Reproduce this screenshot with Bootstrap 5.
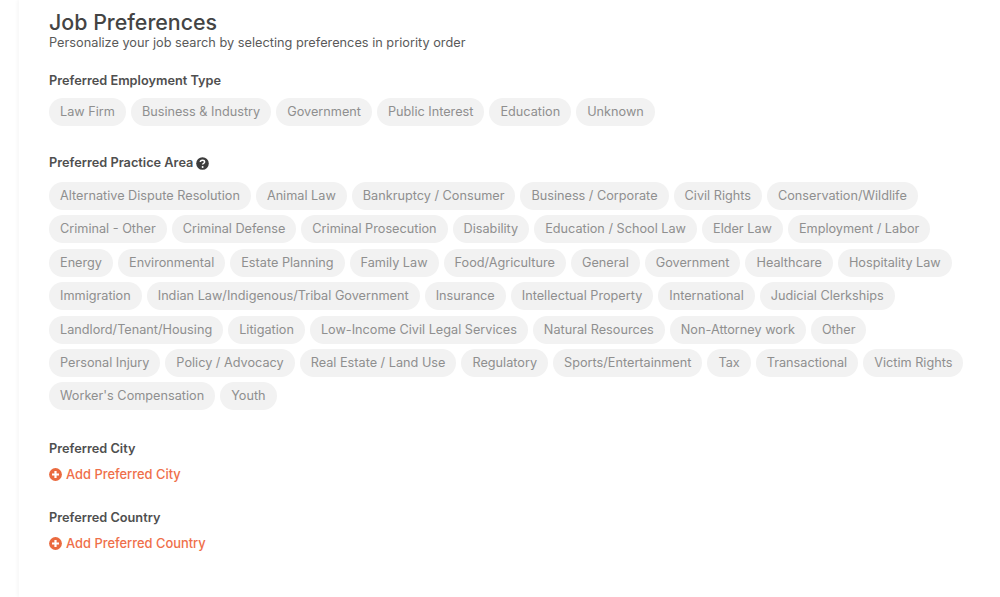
<!DOCTYPE html>
<html lang="en">
<head>
    <meta charset="UTF-8">
    <meta name="viewport" content="width=device-width, initial-scale=1.0">
    <title>Job Preferences</title>
    <link href="https://cdn.jsdelivr.net/npm/bootstrap@5.3.0/dist/css/bootstrap.min.css" rel="stylesheet">
    <style>
        html, body { height: 100%; overflow: hidden; }
        body { background-color: #fff; font-family: "Inter", "Liberation Sans", sans-serif; color: #4a4a4a; }
        .pref-panel { margin-left: 19px; min-height: 100%; padding: 9px 30px 0; box-shadow: -2px 0 3px rgba(0, 0, 0, 0.03); }
        .pref-title { font-size: 21.4px; line-height: 26px; font-weight: 500; color: #444; margin: 0; }
        .pref-sub { font-size: 12.75px; line-height: 15px; margin: 0 0 22px; color: #5a5a5a; }
        .pref-label { font-size: 12.75px; line-height: 18px; font-weight: 600; color: #4f4f4f; margin: 0; gap: 3px; }
        .pref-chips { display: flex; flex-wrap: wrap; gap: 5.4px 5px; margin-top: 8px; }
        .pref-chips-wide { margin-top: 10px; }
        .pref-chip { background-color: #f2f2f2; color: #8f8f8f; font-size: 12.7px; line-height: 28px; padding: 0 11px; border-radius: 14px; white-space: nowrap; }
        .pref-group { margin-bottom: 28px; }
        .pref-group-last { margin-bottom: 30px; }
        .pref-add { color: #ef6f4a; font-size: 12.9px; font-weight: 500; line-height: 18px; margin-top: 8px; text-decoration: none; gap: 4px; }
        .pref-add svg { margin-bottom: 2px; }
        .pref-group-sm { margin-bottom: 25px; }
    </style>
</head>
<body>

<div class="pref-panel">
    <h1 class="pref-title">Job Preferences</h1>
    <p class="pref-sub">Personalize your job search by selecting preferences in priority order</p>

    <div class="pref-group">
        <div class="pref-label">Preferred Employment Type</div>
        <div class="pref-chips">
            <span class="pref-chip">Law Firm</span>
            <span class="pref-chip">Business &amp; Industry</span>
            <span class="pref-chip">Government</span>
            <span class="pref-chip">Public Interest</span>
            <span class="pref-chip">Education</span>
            <span class="pref-chip">Unknown</span>
        </div>
    </div>

    <div class="pref-group-last">
        <div class="pref-label d-flex align-items-center">Preferred Practice Area
            <svg width="13" height="13" viewBox="0 0 13 13"><circle cx="6.5" cy="6.5" r="6.3" fill="#3c3c3c"/><path d="M4.3 5.1c0-1.3 1.1-1.9 2.2-1.9s2.1 .6 2.1 1.7c0 1.5-2 1.4-2 2.7" fill="none" stroke="#fff" stroke-width="1.5"/><circle cx="6.6" cy="9.9" r="1" fill="#fff"/></svg>
        </div>
        <div class="pref-chips pref-chips-wide">
            <span class="pref-chip">Alternative Dispute Resolution</span>
            <span class="pref-chip">Animal Law</span>
            <span class="pref-chip">Bankruptcy / Consumer</span>
            <span class="pref-chip">Business / Corporate</span>
            <span class="pref-chip">Civil Rights</span>
            <span class="pref-chip">Conservation/Wildlife</span>
            <span class="pref-chip">Criminal - Other</span>
            <span class="pref-chip">Criminal Defense</span>
            <span class="pref-chip">Criminal Prosecution</span>
            <span class="pref-chip">Disability</span>
            <span class="pref-chip">Education / School Law</span>
            <span class="pref-chip">Elder Law</span>
            <span class="pref-chip">Employment / Labor</span>
            <span class="pref-chip">Energy</span>
            <span class="pref-chip">Environmental</span>
            <span class="pref-chip">Estate Planning</span>
            <span class="pref-chip">Family Law</span>
            <span class="pref-chip">Food/Agriculture</span>
            <span class="pref-chip">General</span>
            <span class="pref-chip">Government</span>
            <span class="pref-chip">Healthcare</span>
            <span class="pref-chip">Hospitality Law</span>
            <span class="pref-chip">Immigration</span>
            <span class="pref-chip">Indian Law/Indigenous/Tribal Government</span>
            <span class="pref-chip">Insurance</span>
            <span class="pref-chip">Intellectual Property</span>
            <span class="pref-chip">International</span>
            <span class="pref-chip">Judicial Clerkships</span>
            <span class="pref-chip">Landlord/Tenant/Housing</span>
            <span class="pref-chip">Litigation</span>
            <span class="pref-chip">Low-Income Civil Legal Services</span>
            <span class="pref-chip">Natural Resources</span>
            <span class="pref-chip">Non-Attorney work</span>
            <span class="pref-chip">Other</span>
            <span class="pref-chip">Personal Injury</span>
            <span class="pref-chip">Policy / Advocacy</span>
            <span class="pref-chip">Real Estate / Land Use</span>
            <span class="pref-chip">Regulatory</span>
            <span class="pref-chip">Sports/Entertainment</span>
            <span class="pref-chip">Tax</span>
            <span class="pref-chip">Transactional</span>
            <span class="pref-chip">Victim Rights</span>
            <span class="pref-chip">Worker's Compensation</span>
            <span class="pref-chip">Youth</span>
        </div>
    </div>

    <div class="pref-group-sm">
        <div class="pref-label">Preferred City</div>
        <a href="#" class="pref-add d-flex align-items-center">
            <svg width="13" height="13" viewBox="0 0 13 13"><circle cx="6.5" cy="6.5" r="6.4" fill="#ea6a3f"/><path d="M6.5 3v7M3 6.5h7" stroke="#fff" stroke-width="2.2"/></svg>
            Add Preferred City
        </a>
    </div>

    <div class="pref-group-sm">
        <div class="pref-label">Preferred Country</div>
        <a href="#" class="pref-add d-flex align-items-center">
            <svg width="13" height="13" viewBox="0 0 13 13"><circle cx="6.5" cy="6.5" r="6.4" fill="#ea6a3f"/><path d="M6.5 3v7M3 6.5h7" stroke="#fff" stroke-width="2.2"/></svg>
            Add Preferred Country
        </a>
    </div>
</div>

</body>
</html>
